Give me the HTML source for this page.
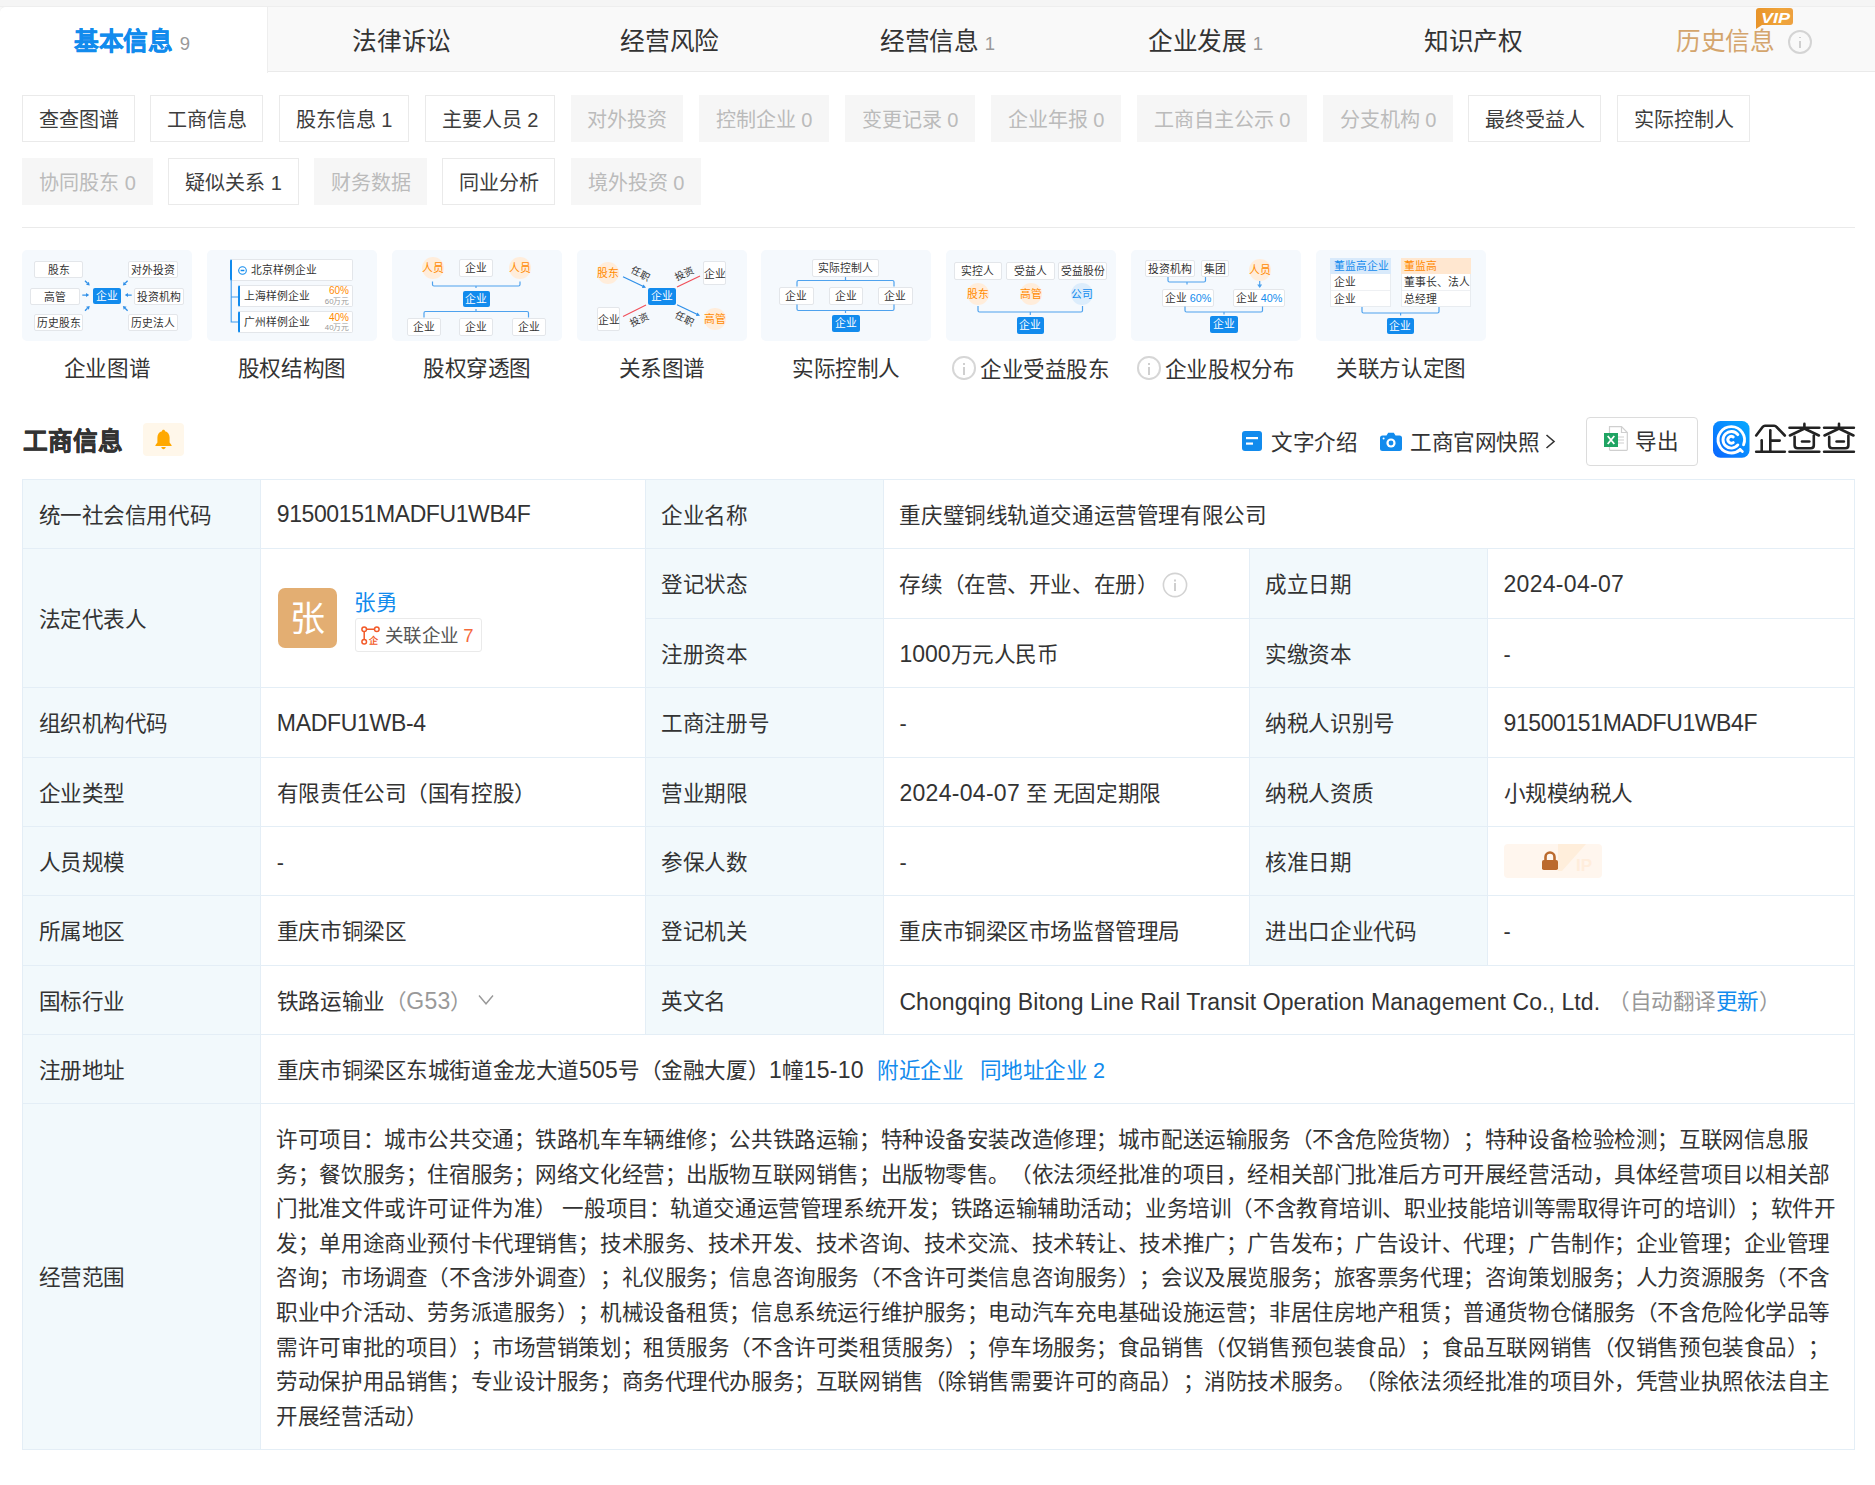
<!DOCTYPE html>
<html lang="zh-CN"><head><meta charset="utf-8">
<style>
*{box-sizing:border-box;margin:0;padding:0}
html,body{width:1875px;height:1485px;overflow:hidden;background:#fff}
body{text-spacing-trim:space-all;position:relative;font-family:"Liberation Sans",sans-serif;color:#333;font-size:21.58px}
.a{position:absolute;white-space:nowrap}
/* tabs */
#topstrip{left:0;top:0;width:1875px;height:7px;background:#f5f5f5}
#tabbar{left:0;top:6px;width:1875px;height:66px;background:#f9f9f9;border-top:1px solid #eee;border-bottom:1px solid #eaeaea}
#acttab{left:0;top:6px;width:268px;height:66.5px;background:#fff;border-top:1px solid #eee;border-right:1px solid #eee;border-top-left-radius:6px}
.tab{top:9px;height:63px;line-height:66px;width:267.86px;text-align:center;font-size:24.67px;color:#333;letter-spacing:-0.33px}
.tab .n{font-size:18.5px;color:#999;margin-left:6px}
/* tags */
.tg{height:47px;line-height:45px;padding-top:2px;text-align:center;font-size:20.04px;color:#3d3d3d;border:1px solid #eaeaea;background:#fff}
.tg.d{color:#bbb;background:#f6f6f6;border-color:#f6f6f6}
.r1{top:95px}.r2{top:158px}

/* cards */
.cd{top:250px;width:169.6px;height:91px;background:#f5f9fd;border-radius:5px;overflow:hidden}
.cd *{position:absolute;white-space:nowrap;font-weight:500}
.bx{background:#fff;border:1px solid #e3e6ea;border-radius:2px;font-size:10.8px;line-height:16px;text-align:center;color:#333}
.bl{background:#128bed;border-radius:2px;font-size:10.8px;line-height:16px;text-align:center;color:#fff}
.ci{background:#ffeddb;border-radius:50%;width:22px;height:22px;font-size:10.8px;line-height:22px;text-align:center;color:#ff8a00}
.ln{border:1.2px solid #5ca9ee}
.cl{top:356px;height:26px;line-height:26px;width:169.6px;text-align:center;font-size:21.58px;color:#333;letter-spacing:-0.42px}
.ic{display:inline-block;position:relative;width:23.5px;height:23.5px;border:2px solid #d6d6d6;border-radius:50%;vertical-align:-3px;margin-right:4px}
.ic i{position:absolute;left:9px;width:1.6px;background:#cfcfcf}

/* title */
#ttl{left:23px;top:426.5px;height:30px;line-height:30px;font-size:24.67px;font-weight:bold;-webkit-text-stroke:0.5px #333;color:#333}
#bell{left:143px;top:423px;width:41px;height:33px;background:#fff7ea;border-radius:4px}
.tl{top:427.5px;height:30px;line-height:30px;font-size:21.58px;color:#333;letter-spacing:-0.42px}
#exp{left:1585.5px;top:417px;width:112px;height:48.5px;border:1px solid #dcdcdc;border-radius:4px;background:#fff}
/* table */
.lb{background:#f2f9fc}
.hl{height:1px;background:#e4eef6}
.vl{width:1px;background:#e4eef6}
.c{height:30px;line-height:30px;font-size:21.58px;color:#333;letter-spacing:-0.42px;margin-top:1px}
.lk{color:#128bed}
</style></head><body>
<div class="a" id="topstrip"></div>
<div class="a" id="tabbar"></div>
<div class="a" id="acttab"></div>
<div class="a tab" style="left:-2px;color:#128bed;font-weight:bold"><span style="-webkit-text-stroke:0.4px #128bed">基本信息</span><span class="n" style="font-weight:normal;margin-left:7px">9</span></div>
<div class="a tab" style="left:267.86px">法律诉讼</div>
<div class="a tab" style="left:535.71px">经营风险</div>
<div class="a tab" style="left:803.57px">经营信息<span class="n">1</span></div>
<div class="a tab" style="left:1071.43px">企业发展<span class="n">1</span></div>
<div class="a tab" style="left:1339.29px">知识产权</div>
<div class="a tab" style="left:1607.14px;color:#d4a56d;padding-left:6px">历史信息<span style="display:inline-block;width:24.5px;height:24.5px;border:2px solid #d4d4d4;border-radius:50%;vertical-align:-4px;margin-left:13px;position:relative"><i style="position:absolute;left:9.5px;top:5px;width:1.6px;height:1.8px;background:#cfcfcf"></i><i style="position:absolute;left:9.5px;top:9px;width:1.6px;height:7.5px;background:#cfcfcf"></i></span></div>

<svg class="a" style="left:1755px;top:7px" width="39" height="22" viewBox="0 0 39 22"><defs><linearGradient id="vg" x1="0" y1="0" x2="1" y2="0"><stop offset="0" stop-color="#e8942a"/><stop offset="0.7" stop-color="#f0a53a"/><stop offset="1" stop-color="#eda040"/></linearGradient></defs><path d="M4 1 H35 Q38 1 38 4 V15 Q38 18 35 18 H7 L1 22 V4 Q1 1 4 1 Z" fill="url(#vg)"/><text x="20.5" y="15.5" text-anchor="middle" font-size="15.5" font-weight="bold" font-style="italic" fill="#fff" font-family="Liberation Sans, sans-serif" textLength="29" lengthAdjust="spacingAndGlyphs">VIP</text></svg>
<!-- tags row 1 -->
<div class="a tg r1" style="left:22px;width:113px">查查图谱</div>
<div class="a tg r1" style="left:150px;width:113px">工商信息</div>
<div class="a tg r1" style="left:279px;width:130px">股东信息 1</div>
<div class="a tg r1" style="left:425px;width:130px">主要人员 2</div>
<div class="a tg r1 d" style="left:571px;width:112px">对外投资</div>
<div class="a tg r1 d" style="left:699px;width:130px">控制企业 0</div>
<div class="a tg r1 d" style="left:845px;width:130px">变更记录 0</div>
<div class="a tg r1 d" style="left:991px;width:130px">企业年报 0</div>
<div class="a tg r1 d" style="left:1137px;width:170px">工商自主公示 0</div>
<div class="a tg r1 d" style="left:1323px;width:130px">分支机构 0</div>
<div class="a tg r1" style="left:1468px;width:133px">最终受益人</div>
<div class="a tg r1" style="left:1617px;width:133px">实际控制人</div>
<!-- tags row 2 -->
<div class="a tg r2 d" style="left:22px;width:131px">协同股东 0</div>
<div class="a tg r2" style="left:168px;width:131px">疑似关系 1</div>
<div class="a tg r2 d" style="left:314px;width:113px">财务数据</div>
<div class="a tg r2" style="left:442px;width:113px">同业分析</div>
<div class="a tg r2 d" style="left:571px;width:130px">境外投资 0</div>


<div class="a" style="left:22px;top:227px;width:1833px;height:1px;background:#eaeaea"></div>
<!-- card 1 -->
<div class="a cd" style="left:22.2px">
 <div class="bx" style="left:12px;top:11px;width:49px;height:17px">股东</div>
 <div class="bx" style="left:106px;top:11px;width:50px;height:17px">对外投资</div>
 <div class="bx" style="left:7.5px;top:37.5px;width:50px;height:17px">高管</div>
 <div class="bl" style="left:71px;top:37.5px;width:28px;height:16.5px">企业</div>
 <div class="bx" style="left:112px;top:37.5px;width:50px;height:17px">投资机构</div>
 <div class="bx" style="left:12px;top:64px;width:49px;height:17px">历史股东</div>
 <div class="bx" style="left:106px;top:64px;width:50px;height:17px">历史法人</div>
 <svg style="left:0;top:0" width="170" height="91" viewBox="0 0 170 91">
  <g><path d="M63.00 30.80 L65.46 33.26" stroke="#2f8fe8" stroke-width="1.3"/><path d="M67.72 35.52 L64.05 34.68 L66.88 31.85 Z" fill="#2f8fe8"/><path d="M105.60 30.80 L103.14 33.26" stroke="#2f8fe8" stroke-width="1.3"/><path d="M100.88 35.52 L101.72 31.85 L104.55 34.68 Z" fill="#2f8fe8"/><path d="M60.30 45.10 L64.00 45.10" stroke="#2f8fe8" stroke-width="1.3"/><path d="M67.20 45.10 L64.00 47.10 L64.00 43.10 Z" fill="#2f8fe8"/><path d="M109.70 45.10 L106.00 45.10" stroke="#2f8fe8" stroke-width="1.3"/><path d="M102.80 45.10 L106.00 43.10 L106.00 47.10 Z" fill="#2f8fe8"/><path d="M63.00 60.70 L65.46 58.24" stroke="#2f8fe8" stroke-width="1.3"/><path d="M67.72 55.98 L66.88 59.65 L64.05 56.82 Z" fill="#2f8fe8"/><path d="M105.60 60.70 L103.14 58.24" stroke="#2f8fe8" stroke-width="1.3"/><path d="M100.88 55.98 L104.55 56.82 L101.72 59.65 Z" fill="#2f8fe8"/></g>
 </svg>
</div>
<div class="a cl" style="left:22.2px">企业图谱</div>

<!-- card 2 -->
<div class="a cd" style="left:207px">
 <div class="bx" style="left:23px;top:9px;width:122.5px;height:21.5px;border-left:2.7px solid #128bed;text-align:left;line-height:21px;padding-left:18.5px">北京样例企业</div>
 <svg style="left:30.5px;top:15.8px" width="9" height="9" viewBox="0 0 9 9"><circle cx="4.5" cy="4.5" r="3.8" stroke="#128bed" stroke-width="1.1" fill="none"/><path d="M2.6 4.5 H6.4" stroke="#128bed" stroke-width="1.3"/></svg>
 <div class="bx" style="left:31px;top:35px;width:114.5px;height:21.5px;border-left:2.7px solid #128bed;text-align:left;line-height:21px;padding-left:3.5px">上海样例企业</div>
 <div style="left:115px;top:36px;width:27px;text-align:right;font-size:10px;line-height:10px;color:#ff8a00">60%</div>
 <div style="left:110px;top:46.5px;width:32.5px;text-align:right;font-size:7.8px;line-height:9px;color:#999">60万元</div>
 <div class="bx" style="left:31px;top:61px;width:114.5px;height:21.5px;border-left:2.7px solid #128bed;text-align:left;line-height:21px;padding-left:3.5px">广州样例企业</div>
 <div style="left:115px;top:62.5px;width:27px;text-align:right;font-size:10px;line-height:10px;color:#ff8a00">40%</div>
 <div style="left:110px;top:73px;width:32.5px;text-align:right;font-size:7.8px;line-height:9px;color:#999">40万元</div>
 <svg style="left:0;top:0" width="170" height="91" viewBox="0 0 170 91"><path d="M24.2 30 V72 H31 M24.2 47 H31" stroke="#3d9bef" stroke-width="1.1" fill="none"/></svg>
</div>
<div class="a cl" style="left:207px">股权结构图</div>

<!-- card 3 -->
<div class="a cd" style="left:392.2px">
 <div class="ci" style="left:29.5px;top:7px">人员</div>
 <div class="bx" style="left:67px;top:9px;width:34px;height:17.5px">企业</div>
 <div class="ci" style="left:116.5px;top:7px">人员</div>
 <div class="bl" style="left:70.5px;top:40.5px;width:27.5px;height:16.5px">企业</div>
 <div class="bx" style="left:15px;top:68px;width:34px;height:17.5px">企业</div>
 <div class="bx" style="left:67px;top:68px;width:34px;height:17.5px">企业</div>
 <div class="bx" style="left:119.5px;top:68px;width:34px;height:17.5px">企业</div>
 <svg style="left:0;top:0" width="170" height="91" viewBox="0 0 170 91"><g stroke="#4ea2ee" stroke-width="1.2" fill="none">
  <path d="M40.5 31.5 V34.5 Q40.5 36 42 36 H126.5 Q128 36 128 34.5 V31.5 M84 36 V38"/>
  <path d="M32 67.5 V63 Q32 61.5 33.5 61.5 H135 Q136.5 61.5 136.5 63 V67.5 M84 61.5 V59"/>
 </g></svg>
</div>
<div class="a cl" style="left:392.2px">股权穿透图</div>

<!-- card 4 -->
<div class="a cd" style="left:577px">
 <div class="ci" style="left:20.3px;top:12px">股东</div>
 <div class="bx" style="left:125.5px;top:11px;width:23.5px;height:23.5px;line-height:24px">企业</div>
 <div class="bl" style="left:70.5px;top:37.5px;width:28px;height:17px;line-height:17px">企业</div>
 <div class="bx" style="left:20px;top:57px;width:23px;height:23.5px;line-height:24px">企业</div>
 <div class="ci" style="left:126.5px;top:58px">高管</div>
 <svg style="left:0;top:0" width="170" height="91" viewBox="0 0 170 91">
  <path d="M46 26.8 L67 36.8" stroke="#2f8fe8" stroke-width="1.2"/><path d="M69 37.8 L64.9 37.9 L66.5 34.6 Z" fill="#2f8fe8"/>
  <path d="M100 37 L123 26" stroke="#f0505a" stroke-width="1.2"/>
  <path d="M46 66.5 L69 55" stroke="#f0505a" stroke-width="1.2"/>
  <path d="M100 54.8 L121 64.8" stroke="#2f8fe8" stroke-width="1.2"/><path d="M123 65.8 L118.9 65.9 L120.5 62.6 Z" fill="#2f8fe8"/>
 </svg>
 <div style="left:52.8px;top:19px;font-size:9.8px;line-height:10px;color:#333;transform:rotate(27deg)">任职</div>
 <div style="left:97.5px;top:19px;font-size:9.8px;line-height:10px;color:#333;transform:rotate(-27deg)">投资</div>
 <div style="left:52.5px;top:65px;font-size:9.8px;line-height:10px;color:#333;transform:rotate(-27deg)">投资</div>
 <div style="left:97px;top:64px;font-size:9.8px;line-height:10px;color:#333;transform:rotate(27deg)">任职</div>
</div>
<div class="a cl" style="left:577px">关系图谱</div>

<!-- card 5 -->
<div class="a cd" style="left:761.1px">
 <div class="bx" style="left:51px;top:9px;width:67px;height:17.5px">实际控制人</div>
 <div class="bx" style="left:18px;top:37px;width:34.5px;height:17.5px">企业</div>
 <div class="bx" style="left:68px;top:37px;width:34px;height:17.5px">企业</div>
 <div class="bx" style="left:117px;top:37px;width:34.5px;height:17.5px">企业</div>
 <div class="bl" style="left:71px;top:65.3px;width:28px;height:17px;line-height:17px">企业</div>
 <svg style="left:0;top:0" width="170" height="91" viewBox="0 0 170 91"><g stroke="#4ea2ee" stroke-width="1.2" fill="none">
  <path d="M36 36.5 V32 Q36 30.5 37.5 30.5 H131.5 Q133 30.5 133 32 V36.5 M84.5 30.5 V27"/>
  <path d="M36 54.5 V59 Q36 60.5 37.5 60.5 H131.5 Q133 60.5 133 59 V54.5 M84.5 60.5 V63"/>
 </g></svg>
</div>
<div class="a cl" style="left:761.1px">实际控制人</div>

<!-- card 6 -->
<div class="a cd" style="left:946.2px">
 <div class="bx" style="left:7.5px;top:12px;width:48.5px;height:17.5px">实控人</div>
 <div class="bx" style="left:59.5px;top:12px;width:49px;height:17.5px">受益人</div>
 <div class="bx" style="left:112px;top:12px;width:49px;height:17.5px">受益股份</div>
 <div class="ci" style="left:21px;top:33px">股东</div>
 <div class="ci" style="left:73.5px;top:33px">高管</div>
 <div class="ci" style="left:125px;top:33px;background:#dcedfc;color:#128bed">公司</div>
 <div class="bl" style="left:70.5px;top:67px;width:27.5px;height:16.5px">企业</div>
 <svg style="left:0;top:0" width="170" height="91" viewBox="0 0 170 91"><g stroke="#4ea2ee" stroke-width="1.2" fill="none">
  <path d="M32 56 V60.5 Q32 62 33.5 62 H135 Q136.5 62 136.5 60.5 V56 M84.3 62 V65"/>
 </g></svg>
</div>
<div class="a cl" style="left:946.2px"><span class="ic"><i style="top:5px;height:2px"></i><i style="top:9px;height:8px"></i></span>企业受益股东</div>

<!-- card 7 -->
<div class="a cd" style="left:1131.1px">
 <div class="bx" style="left:14px;top:10px;width:49.5px;height:17px">投资机构</div>
 <div class="bx" style="left:70px;top:10px;width:27.5px;height:17px">集团</div>
 <div class="ci" style="left:117.5px;top:9px">人员</div>
 <div class="bx" style="left:31px;top:38.5px;width:52px;height:18px;line-height:16px">企业 <span style="position:static;color:#128bed">60%</span></div>
 <div class="bx" style="left:102px;top:38.5px;width:52px;height:18px;line-height:16px">企业 <span style="position:static;color:#128bed">40%</span></div>
 <div class="bl" style="left:79px;top:66.3px;width:27.5px;height:16.5px">企业</div>
 <svg style="left:0;top:0" width="170" height="91" viewBox="0 0 170 91"><g stroke="#4ea2ee" stroke-width="1.2" fill="none">
  <path d="M37 27 V30.5 Q37 32 38.5 32 H73 Q74.5 32 74.5 30.5 V27 M56 32 V34.5"/>
  <path d="M54 56.5 V60.5 Q54 62 55.5 62 H130 Q131.5 62 131.5 60.5 V56.5 M93 62 V64.5"/>
  <path d="M128.7 31 V37"/>
 </g><path d="M126.2 34.5 L128.7 38 L131.2 34.5 Z" fill="#4ea2ee"/></svg>
</div>
<div class="a cl" style="left:1131.1px"><span class="ic"><i style="top:5px;height:2px"></i><i style="top:9px;height:8px"></i></span>企业股权分布</div>

<!-- card 8 -->
<div class="a cd" style="left:1316.2px">
 <div style="left:14px;top:7.5px;width:60.5px;height:49.5px;background:#fff;border:1px solid #e8ecf0"></div>
 <div style="left:14px;top:7.5px;width:60.5px;height:16px;background:#d9eafb;color:#128bed;font-size:10.8px;line-height:16px;padding-left:4px">董监高企业</div>
 <div style="left:18px;top:24px;font-size:10.8px;line-height:16px;color:#333">企业</div>
 <div style="left:15px;top:40px;width:58.5px;height:1px;background:#eef0f3"></div>
 <div style="left:18px;top:41px;font-size:10.8px;line-height:16px;color:#333">企业</div>
 <div style="left:84.5px;top:7.5px;width:70px;height:49.5px;background:#fff;border:1px solid #e8ecf0"></div>
 <div style="left:84.5px;top:7.5px;width:70px;height:16px;background:#ffe7d0;color:#ff8a00;font-size:10.8px;line-height:16px;padding-left:3.5px">董监高</div>
 <div style="left:88px;top:24px;font-size:10.8px;line-height:16px;color:#333">董事长、法人</div>
 <div style="left:85.5px;top:40px;width:68px;height:1px;background:#eef0f3"></div>
 <div style="left:88px;top:41px;font-size:10.8px;line-height:16px;color:#333">总经理</div>
 <div class="bl" style="left:70.5px;top:67.5px;width:27.5px;height:16.5px">企业</div>
 <svg style="left:0;top:0" width="170" height="91" viewBox="0 0 170 91"><g stroke="#4ea2ee" stroke-width="1.2" fill="none">
  <path d="M46 57 V61.5 Q46 63 47.5 63 H121.5 Q123 63 123 61.5 V57 M84.6 63 V65.5"/>
 </g></svg>
</div>
<div class="a cl" style="left:1316.2px">关联方认定图</div>



<div class="a" id="ttl">工商信息</div>
<div class="a" id="bell"><svg style="position:absolute;left:11px;top:6px" width="19" height="21" viewBox="0 0 19 21"><path d="M9.5 0.8 C10.4 0.8 11 1.4 11 2.2 C14 2.9 15.6 5.4 15.6 8.6 V13.6 L17.6 16.2 V16.9 H1.4 V16.2 L3.4 13.6 V8.6 C3.4 5.4 5 2.9 8 2.2 C8 1.4 8.6 0.8 9.5 0.8 Z M7.3 18 H11.7 C11.5 19.3 10.6 20.2 9.5 20.2 C8.4 20.2 7.5 19.3 7.3 18 Z" fill="#ffa800"/></svg></div>
<svg class="a" style="left:1242px;top:431px" width="20" height="20" viewBox="0 0 20 20"><rect x="0" y="0" width="20" height="20" rx="3" fill="#128bed"/><rect x="4" y="6" width="12" height="2.2" fill="#fff"/><rect x="4" y="11.5" width="7" height="2.2" fill="#fff"/></svg>
<div class="a tl" style="left:1271px">文字介绍</div>
<svg class="a" style="left:1380px;top:432px" width="22" height="19" viewBox="0 0 22 19"><path d="M2.5 3.5 H6.5 L8.2 0.8 H13.8 L15.5 3.5 H19.5 Q22 3.5 22 6 V16.5 Q22 19 19.5 19 H2.5 Q0 19 0 16.5 V6 Q0 3.5 2.5 3.5 Z" fill="#128bed"/><circle cx="11" cy="11" r="4.6" fill="#fff"/><circle cx="11" cy="11" r="2.4" fill="#128bed"/><circle cx="3.6" cy="6.4" r="1" fill="#fff"/></svg>
<div class="a tl" style="left:1410px">工商官网快照</div>
<svg class="a" style="left:1545px;top:434px" width="11" height="15" viewBox="0 0 11 15"><path d="M1.5 1 L9 7.5 L1.5 14" stroke="#333" stroke-width="1.6" fill="none"/></svg>
<div class="a" id="exp"></div>
<svg class="a" style="left:1603.5px;top:426px" width="24" height="25" viewBox="0 0 24 25"><path d="M5.5 0.7 H17.5 L23.3 6.5 V23.5 Q23.3 24.3 22.5 24.3 H6.3 Q5.5 24.3 5.5 23.5 Z" fill="#fff" stroke="#cfcfcf" stroke-width="1.2"/><path d="M17.5 0.7 V6.5 H23.3" fill="none" stroke="#cfcfcf" stroke-width="1.2"/><path d="M13.5 11 H20 M13.5 14 H20 M13.5 17 H20" stroke="#cfcfcf" stroke-width="1"/><rect x="0" y="7" width="14" height="14" fill="#1fa463"/><path d="M3.7 10 L10.3 18 M10.3 10 L3.7 18" stroke="#fff" stroke-width="1.8"/></svg>
<div class="a tl" style="left:1635px;top:427px">导出</div>
<svg class="a" style="left:1713px;top:420.5px" width="37" height="37" viewBox="0 0 37 37"><defs><linearGradient id="lg" x1="0" y1="1" x2="1" y2="0"><stop offset="0" stop-color="#0b66ff"/><stop offset="1" stop-color="#06aaff"/></linearGradient></defs><rect width="36.5" height="36.7" rx="7.5" fill="url(#lg)"/><g fill="none" stroke="#fff" stroke-width="2.9" stroke-linecap="round"><path d="M27.13 28.61 A13.2 13.2 0 1 1 30.54 23.74"/><path d="M27.13 28.61 L29.3 30.5"/><path d="M24.84 23.91 A8.3 8.3 0 1 1 24.84 13.69"/><path d="M20.25 21.59 A3.4 3.4 0 1 1 20.25 16.01"/></g></svg>
<svg class="a" style="left:1750px;top:420px" width="110" height="40" viewBox="0 0 110 40"><g fill="none" stroke="#222" stroke-width="2.6" stroke-linecap="round" stroke-linejoin="round">
<path d="M6.2 15.5 L12.6 7 Q13.6 5.7 15 5.7 H24.2 Q25.6 5.7 26.6 7 L34.8 15.5"/><path d="M20.3 10.3 V31.7"/><path d="M20.3 20.6 H29.7"/><path d="M11.7 20.2 V31.7"/><path d="M6.2 31.7 H34.8"/>
<g id="cha"><path d="M39.5 7.8 H69.3"/><path d="M54.4 3.9 V8.5"/><path d="M53.5 9 L39.9 15.5 M55.3 9 L68.9 15.5"/><path d="M44.6 16.8 V25.3 Q44.6 28.3 47.6 28.3 H60.8 Q63.8 28.3 63.8 25.3 V15.6"/><path d="M52 21.5 H59.3"/><path d="M39.5 31.7 H69.3"/></g>
<use href="#cha" x="34.6"/>
</g></svg>


<div class="a lb" style="left:22px;top:479px;width:238px;height:970px"></div>
<div class="a lb" style="left:645px;top:479px;width:238px;height:555px"></div>
<div class="a lb" style="left:1249px;top:548px;width:238px;height:417px"></div>
<div class="a hl" style="left:22px;top:479px;width:1833px;height:1px"></div>
<div class="a hl" style="left:22px;top:548px;width:1833px;height:1px"></div>
<div class="a hl" style="left:645px;top:618px;width:1210px;height:1px"></div>
<div class="a hl" style="left:22px;top:687px;width:1833px;height:1px"></div>
<div class="a hl" style="left:22px;top:757px;width:1833px;height:1px"></div>
<div class="a hl" style="left:22px;top:826px;width:1833px;height:1px"></div>
<div class="a hl" style="left:22px;top:895px;width:1833px;height:1px"></div>
<div class="a hl" style="left:22px;top:965px;width:1833px;height:1px"></div>
<div class="a hl" style="left:22px;top:1034px;width:1833px;height:1px"></div>
<div class="a hl" style="left:22px;top:1103px;width:1833px;height:1px"></div>
<div class="a hl" style="left:22px;top:1449px;width:1833px;height:1px"></div>
<div class="a vl" style="left:22px;top:479px;width:1px;height:971px"></div>
<div class="a vl" style="left:260px;top:479px;width:1px;height:971px"></div>
<div class="a vl" style="left:1854px;top:479px;width:1px;height:971px"></div>
<div class="a vl" style="left:645px;top:479px;width:1px;height:555px"></div>
<div class="a vl" style="left:883px;top:479px;width:1px;height:555px"></div>
<div class="a vl" style="left:1249px;top:548px;width:1px;height:417px"></div>
<div class="a vl" style="left:1487px;top:548px;width:1px;height:417px"></div>
<div class="a c" style="left:38.5px;top:499.65px;">统一社会信用代码</div>
<div class="a c" style="left:276.8px;top:499.65px;font-size:23px;letter-spacing:-0.4px;margin-top:-0.5px">91500151MADFU1WB4F</div>
<div class="a c" style="left:661.3px;top:499.65px;">企业名称</div>
<div class="a c" style="left:899.4px;top:499.65px;">重庆璧铜线轨道交通运营管理有限公司</div>
<div class="a c" style="left:38.5px;top:603.85px;">法定代表人</div>
<div class="a c" style="left:661.3px;top:569.25px;">登记状态</div>
<div class="a c" style="left:899.4px;top:569.25px;">存续（在营、开业、在册）</div>
<div class="a c" style="left:1265.3px;top:569.25px;">成立日期</div>
<div class="a c" style="left:1503.5px;top:569.25px;font-size:23px;letter-spacing:0.3px;margin-top:-0.5px">2024-04-07</div>
<div class="a c" style="left:661.3px;top:638.8px;">注册资本</div>
<div class="a c" style="left:899.4px;top:638.8px;"><span style="font-size:23px;letter-spacing:0px;line-height:1">1000</span>万元人民币</div>
<div class="a c" style="left:1265.3px;top:638.8px;">实缴资本</div>
<div class="a c" style="left:1503.5px;top:638.8px;">-</div>
<div class="a c" style="left:38.5px;top:708.2px;">组织机构代码</div>
<div class="a c" style="left:276.8px;top:708.2px;font-size:23px;letter-spacing:-0.31px;margin-top:-0.5px">MADFU1WB-4</div>
<div class="a c" style="left:661.3px;top:708.2px;">工商注册号</div>
<div class="a c" style="left:899.4px;top:708.2px;">-</div>
<div class="a c" style="left:1265.3px;top:708.2px;">纳税人识别号</div>
<div class="a c" style="left:1503.5px;top:708.2px;font-size:23px;letter-spacing:-0.4px;margin-top:-0.5px">91500151MADFU1WB4F</div>
<div class="a c" style="left:38.5px;top:777.55px;">企业类型</div>
<div class="a c" style="left:276.8px;top:777.55px;">有限责任公司（国有控股）</div>
<div class="a c" style="left:661.3px;top:777.55px;">营业期限</div>
<div class="a c" style="left:899.4px;top:777.55px;"><span style="font-size:23px;letter-spacing:0.3px;line-height:1">2024-04-07</span> 至 无固定期限</div>
<div class="a c" style="left:1265.3px;top:777.55px;">纳税人资质</div>
<div class="a c" style="left:1503.5px;top:777.55px;">小规模纳税人</div>
<div class="a c" style="left:38.5px;top:846.75px;">人员规模</div>
<div class="a c" style="left:276.8px;top:846.75px;">-</div>
<div class="a c" style="left:661.3px;top:846.75px;">参保人数</div>
<div class="a c" style="left:899.4px;top:846.75px;">-</div>
<div class="a c" style="left:1265.3px;top:846.75px;">核准日期</div>
<div class="a c" style="left:38.5px;top:916.2px;">所属地区</div>
<div class="a c" style="left:276.8px;top:916.2px;">重庆市铜梁区</div>
<div class="a c" style="left:661.3px;top:916.2px;">登记机关</div>
<div class="a c" style="left:899.4px;top:916.2px;">重庆市铜梁区市场监督管理局</div>
<div class="a c" style="left:1265.3px;top:916.2px;">进出口企业代码</div>
<div class="a c" style="left:1503.5px;top:916.2px;">-</div>
<div class="a c" style="left:38.5px;top:985.5px;">国标行业</div>
<div class="a c" style="left:276.8px;top:985.5px;">铁路运输业<span style="color:#999">（<span style="font-size:23px;line-height:1;letter-spacing:0.2px">G53</span>）</span></div>
<div class="a c" style="left:661.3px;top:985.5px;">英文名</div>
<div class="a c" style="left:899.4px;top:985.5px;font-size:23px;letter-spacing:0.08px">Chongqing Bitong Line Rail Transit Operation Management Co., Ltd.</div>
<div class="a c" style="left:1608px;top:985.5px;color:#999">（自动翻译<span class="lk">更新</span>）</div>
<svg class="a" style="left:478px;top:994px" width="16" height="12" viewBox="0 0 16 12"><path d="M1 1.5 L8 9.8 L15 1.5" stroke="#999" stroke-width="1.4" fill="none"/></svg>
<div class="a c" style="left:38.5px;top:1054.5px;">注册地址</div>
<div class="a c" style="left:276.8px;top:1054.5px;">重庆市铜梁区东城街道金龙大道<span style="font-size:23px;letter-spacing:0.25px;line-height:1">505</span>号（金融大厦）<span style="font-size:23px;letter-spacing:0.25px;line-height:1">1</span>幢<span style="font-size:23px;letter-spacing:0.25px;line-height:1">15-10</span></div>
<div class="a c lk" style="left:877px;top:1054.5px">附近企业</div>
<div class="a c lk" style="left:979.5px;top:1054.5px">同地址企业 2</div>
<div class="a c" style="left:38.5px;top:1262.05px;">经营范围</div>
<div class="a" style="left:276.3px;top:1123px;font-size:21.58px;line-height:34.6px;color:#333;letter-spacing:-0.42px">许可项目：城市公共交通；铁路机车车辆维修；公共铁路运输；特种设备安装改造修理；城市配送运输服务（不含危险货物）；特种设备检验检测；互联网信息服<br>务；餐饮服务；住宿服务；网络文化经营；出版物互联网销售；出版物零售。（依法须经批准的项目，经相关部门批准后方可开展经营活动，具体经营项目以相关部<br>门批准文件或许可证件为准） 一般项目：轨道交通运营管理系统开发；铁路运输辅助活动；业务培训（不含教育培训、职业技能培训等需取得许可的培训）；软件开<br>发；单用途商业预付卡代理销售；技术服务、技术开发、技术咨询、技术交流、技术转让、技术推广；广告发布；广告设计、代理；广告制作；企业管理；企业管理<br>咨询；市场调查（不含涉外调查）；礼仪服务；信息咨询服务（不含许可类信息咨询服务）；会议及展览服务；旅客票务代理；咨询策划服务；人力资源服务（不含<br>职业中介活动、劳务派遣服务）；机械设备租赁；信息系统运行维护服务；电动汽车充电基础设施运营；非居住房地产租赁；普通货物仓储服务（不含危险化学品等<br>需许可审批的项目）；市场营销策划；租赁服务（不含许可类租赁服务）；停车场服务；食品销售（仅销售预包装食品）；食品互联网销售（仅销售预包装食品）；<br>劳动保护用品销售；专业设计服务；商务代理代办服务；互联网销售（除销售需要许可的商品）；消防技术服务。（除依法须经批准的项目外，凭营业执照依法自主<br>开展经营活动）</div>
<div class="a" style="left:278px;top:588px;width:59px;height:60px;background:#e3ae72;border-radius:7px;color:#fff;font-size:35px;font-weight:300;line-height:62px;text-align:center">张</div>
<div class="a c lk" style="left:354px;top:587px">张勇</div>
<div class="a" style="left:354.5px;top:618px;width:127px;height:33.5px;border:1px solid #eaeaea;border-radius:3px;background:#fff"></div>
<svg class="a" style="left:360.5px;top:625.5px" width="19" height="19" viewBox="0 0 19 19"><g stroke="#f25a29" stroke-width="1.5" fill="none"><circle cx="3.2" cy="3.2" r="2.3"/><circle cx="15.8" cy="3.2" r="2.3"/><circle cx="3.2" cy="15.8" r="2.3"/><path d="M5.5 3.2 H13.5 M3.2 5.5 V13.5"/></g><text x="8.3" y="17.8" font-size="9" font-weight="bold" fill="#f25a29" font-family="Liberation Sans, sans-serif">企</text></svg>
<div class="a" style="left:384.5px;top:620.5px;height:30px;line-height:30px;font-size:18.5px;letter-spacing:-0.5px;color:#555">关联企业 <span style="color:#f56a3c;letter-spacing:0">7</span></div>
<svg class="a" style="left:1162px;top:572px" width="26" height="26" viewBox="0 0 26 26"><circle cx="13" cy="13" r="11.6" stroke="#d3d3d3" stroke-width="1.6" fill="none"/><rect x="12" y="7.5" width="2" height="2" fill="#cfcfcf"/><rect x="12" y="11" width="2" height="8" fill="#cfcfcf"/></svg>
<div class="a" style="left:1504px;top:844px;width:98px;height:34px;background:#fff6ee;border-radius:4px;overflow:hidden"></div>
<svg class="a" style="left:1504px;top:844px" width="98" height="34" viewBox="0 0 98 34"><path d="M54 0 H82 L58 27 H54 Z" fill="#ffeedb"/><text x="72" y="27" font-size="17" font-weight="bold" fill="#ffeddc" font-family="Liberation Sans, sans-serif">IP</text><path d="M41.5 16.5 V13 A4.5 4.5 0 0 1 50.5 13 V16.5" stroke="#bb6a2e" stroke-width="2.6" fill="none"/><rect x="38" y="16" width="16" height="10" rx="1.8" fill="#bb6a2e"/></svg>


</body></html>
